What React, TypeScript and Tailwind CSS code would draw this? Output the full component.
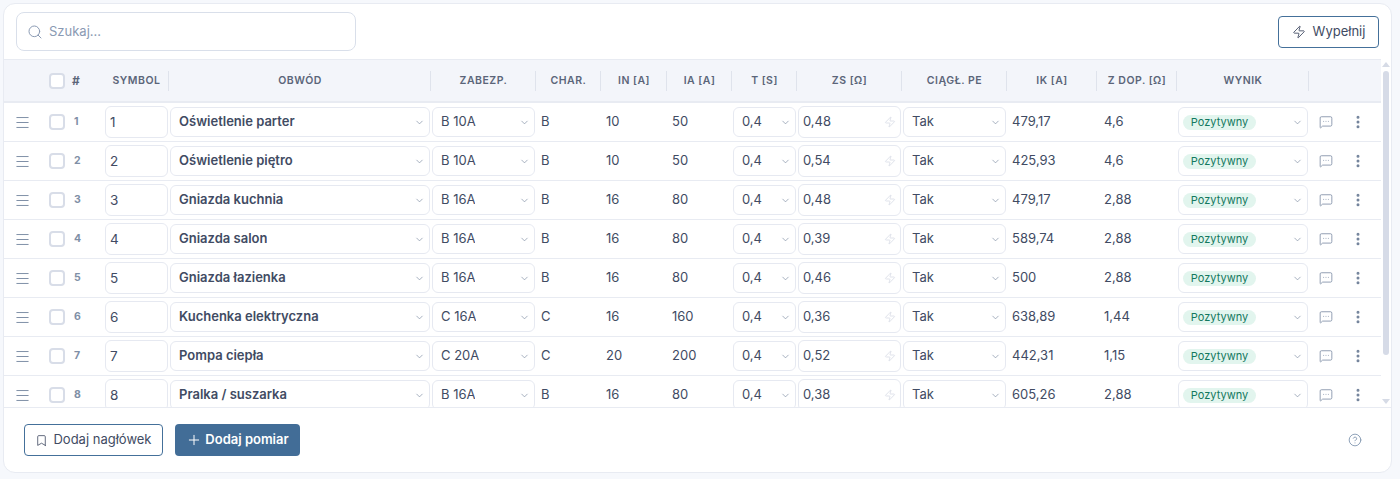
import React from "react";
import { Bookmark, ChevronDown, CircleHelp, EllipsisVertical, Menu, MessageSquareMore, Plus, Search, Zap } from "lucide-react";

const gridCols = "grid grid-cols-[38px_28px_34px_65px_262px_105px_65px_66px_65px_65px_105px_105px_90px_80px_132px_72px]";

const rows = [
  { id: 1, name: "Oświetlenie parter", fuse: "B 10A", ch: "B", inA: "10", ia: "50", zs: "0,48", ik: "479,17", z: "4,6" },
  { id: 2, name: "Oświetlenie piętro", fuse: "B 10A", ch: "B", inA: "10", ia: "50", zs: "0,54", ik: "425,93", z: "4,6" },
  { id: 3, name: "Gniazda kuchnia", fuse: "B 16A", ch: "B", inA: "16", ia: "80", zs: "0,48", ik: "479,17", z: "2,88" },
  { id: 4, name: "Gniazda salon", fuse: "B 16A", ch: "B", inA: "16", ia: "80", zs: "0,39", ik: "589,74", z: "2,88" },
  { id: 5, name: "Gniazda łazienka", fuse: "B 16A", ch: "B", inA: "16", ia: "80", zs: "0,46", ik: "500", z: "2,88" },
  { id: 6, name: "Kuchenka elektryczna", fuse: "C 16A", ch: "C", inA: "16", ia: "160", zs: "0,36", ik: "638,89", z: "1,44" },
  { id: 7, name: "Pompa ciepła", fuse: "C 20A", ch: "C", inA: "20", ia: "200", zs: "0,52", ik: "442,31", z: "1,15" },
  { id: 8, name: "Pralka / suszarka", fuse: "B 16A", ch: "B", inA: "16", ia: "80", zs: "0,38", ik: "605,26", z: "2,88" },
];

const headers = ["SYMBOL", "OBWÓD", "ZABEZP.", "CHAR.", "IN [A]", "IA [A]", "T [S]", "ZS [Ω]", "CIĄGŁ. PE", "IK [A]", "Z DOP. [Ω]", "WYNIK", ""];

function Checkbox() {
  return <span className="block h-4 w-4 rounded-[4px] border-2 border-[#d8dde8] bg-white" />;
}

function SelectBox({ children, pad = "pl-2" }: { children: React.ReactNode; pad?: string }) {
  return (
    <div className={`mx-px flex h-[30px] items-center justify-between rounded-md border border-[#e6e9f1] bg-white pr-[4px] ${pad}`}>
      <div className="min-w-0 truncate">{children}</div>
      <ChevronDown className="h-[11px] w-[11px] shrink-0 text-[#7f8da3]" strokeWidth={1.5} />
    </div>
  );
}

export default function App() {
  return (
    <div className="h-[479px] w-[1400px] overflow-hidden bg-[#f6f8fc] pl-[3px] pt-[3px] font-['Inter',sans-serif] text-[13px] text-[#414b63]">
      <div className="flex h-[470px] w-[1389px] flex-col overflow-hidden rounded-xl border border-[#e8ebf2] bg-white">
        <div className="flex h-[55px] shrink-0 items-center justify-between pl-3 pr-3">
          <div className="flex h-[39px] w-[340px] items-center gap-[6px] rounded-lg border border-[#d9dfea] bg-white pl-[10px]">
            <Search className="h-4 w-4 text-[#8a9ab3]" strokeWidth={1.5} />
            <span className="text-[#8a9ab3]">Szukaj...</span>
          </div>
          <button className="flex h-8 w-[101px] items-center justify-center gap-[7px] rounded border border-[#44709a] bg-white text-[#414b63]">
            <Zap className="h-[14px] w-[14px]" strokeWidth={1.5} />
            Wypełnij
          </button>
        </div>

        <div className="flex min-h-0 flex-1">
          <div className="min-w-0 flex-1 overflow-hidden">
            <div className={`${gridCols} h-[44px] items-center border-t border-b-2 border-[#e8ebf2] bg-[#f3f5fa] text-[10.5px] font-semibold tracking-[0.5px] text-[#5b6579]`}>
              <span />
              <span className="flex justify-center pl-[2px]"><Checkbox /></span>
              <span className="pl-[2px] text-[12px] font-bold">#</span>
              {headers.map((h, i) => (
                <span key={i} className={`flex h-5 items-center justify-center pl-px ${i < 12 ? "border-r border-[#dfe3ec]" : ""}`}>{h}</span>
              ))}
            </div>
            {rows.map((r) => (
              <div key={r.id} className={`${gridCols} h-[39px] items-center border-b border-[#e8ebf2]`}>
                <Menu className="ml-[10px] h-[17px] w-[17px] text-[#6f819b]" strokeWidth={1.25} />
                <span className="flex justify-center pl-[2px]"><Checkbox /></span>
                <span className="pl-[4px] text-[10.5px] font-bold text-[#7f8fa6]">{r.id}</span>
                <div className="mx-px flex h-8 items-center rounded-md border border-[#e6e9f1] pl-1 text-[13.5px]">{r.id}</div>
                <SelectBox><span className="font-semibold">{r.name}</span></SelectBox>
                <SelectBox>{r.fuse}</SelectBox>
                <span className="pl-[5px]">{r.ch}</span>
                <span className="pl-[5px]">{r.inA}</span>
                <span className="pl-[5px]">{r.ia}</span>
                <SelectBox>0,4</SelectBox>
                <div className="mx-px flex h-8 items-center justify-between rounded-md border border-[#e6e9f1] pl-1 pr-[4px]">
                  {r.zs}
                  <Zap className="h-3 w-3 text-[#d5dae4]" strokeWidth={1.5} />
                </div>
                <SelectBox>Tak</SelectBox>
                <span className="pl-[5px]">{r.ik}</span>
                <span className="pl-[7px]">{r.z}</span>
                <SelectBox pad="pl-1">
                  <span className="block h-[15px] w-[73px] rounded-full bg-[#e2f5ee] text-center text-[11px] leading-[15px] text-[#14795f]">Pozytywny</span>
                </SelectBox>
                <div className="flex items-center pl-[10px]">
                  <MessageSquareMore className="h-[14px] w-[14px] text-[#7a8ba3]" strokeWidth={1.4} />
                  <EllipsisVertical className="ml-[17px] h-4 w-4 text-[#74849c]" strokeWidth={2.5} />
                </div>
              </div>
            ))}
          </div>
          <div className="flex w-[10px] shrink-0 flex-col items-center">
            <span className="mt-[3px] h-0 w-0 border-x-[4px] border-b-[5px] border-x-transparent border-b-[#d6dbe6]" />
            <span className="mt-[4px] h-[284px] w-[6px] rounded-full bg-[#d6dbe7]" />
            <span className="mt-auto mb-[3px] h-0 w-0 border-x-[4px] border-t-[5px] border-x-transparent border-t-[#d6dbe6]" />
          </div>
        </div>

        <div className="flex h-[65px] shrink-0 items-center justify-between border-t border-[#e8ebf2] pl-5 pr-[29px]">
          <div className="flex items-center gap-3">
            <button className="flex h-8 w-[139px] items-center justify-center gap-[5px] rounded border border-[#44709a] bg-white text-[#414b63]">
              <Bookmark className="h-[13px] w-[13px]" strokeWidth={1.5} />
              Dodaj nagłówek
            </button>
            <button className="flex h-8 w-[125px] items-center justify-center gap-[3px] rounded bg-[#426d97] font-semibold text-white">
              <Plus className="h-4 w-4" strokeWidth={1.5} />
              Dodaj pomiar
            </button>
          </div>
          <CircleHelp className="h-[14px] w-[14px] text-[#7f95af]" strokeWidth={1.5} />
        </div>
      </div>
    </div>
  );
}
